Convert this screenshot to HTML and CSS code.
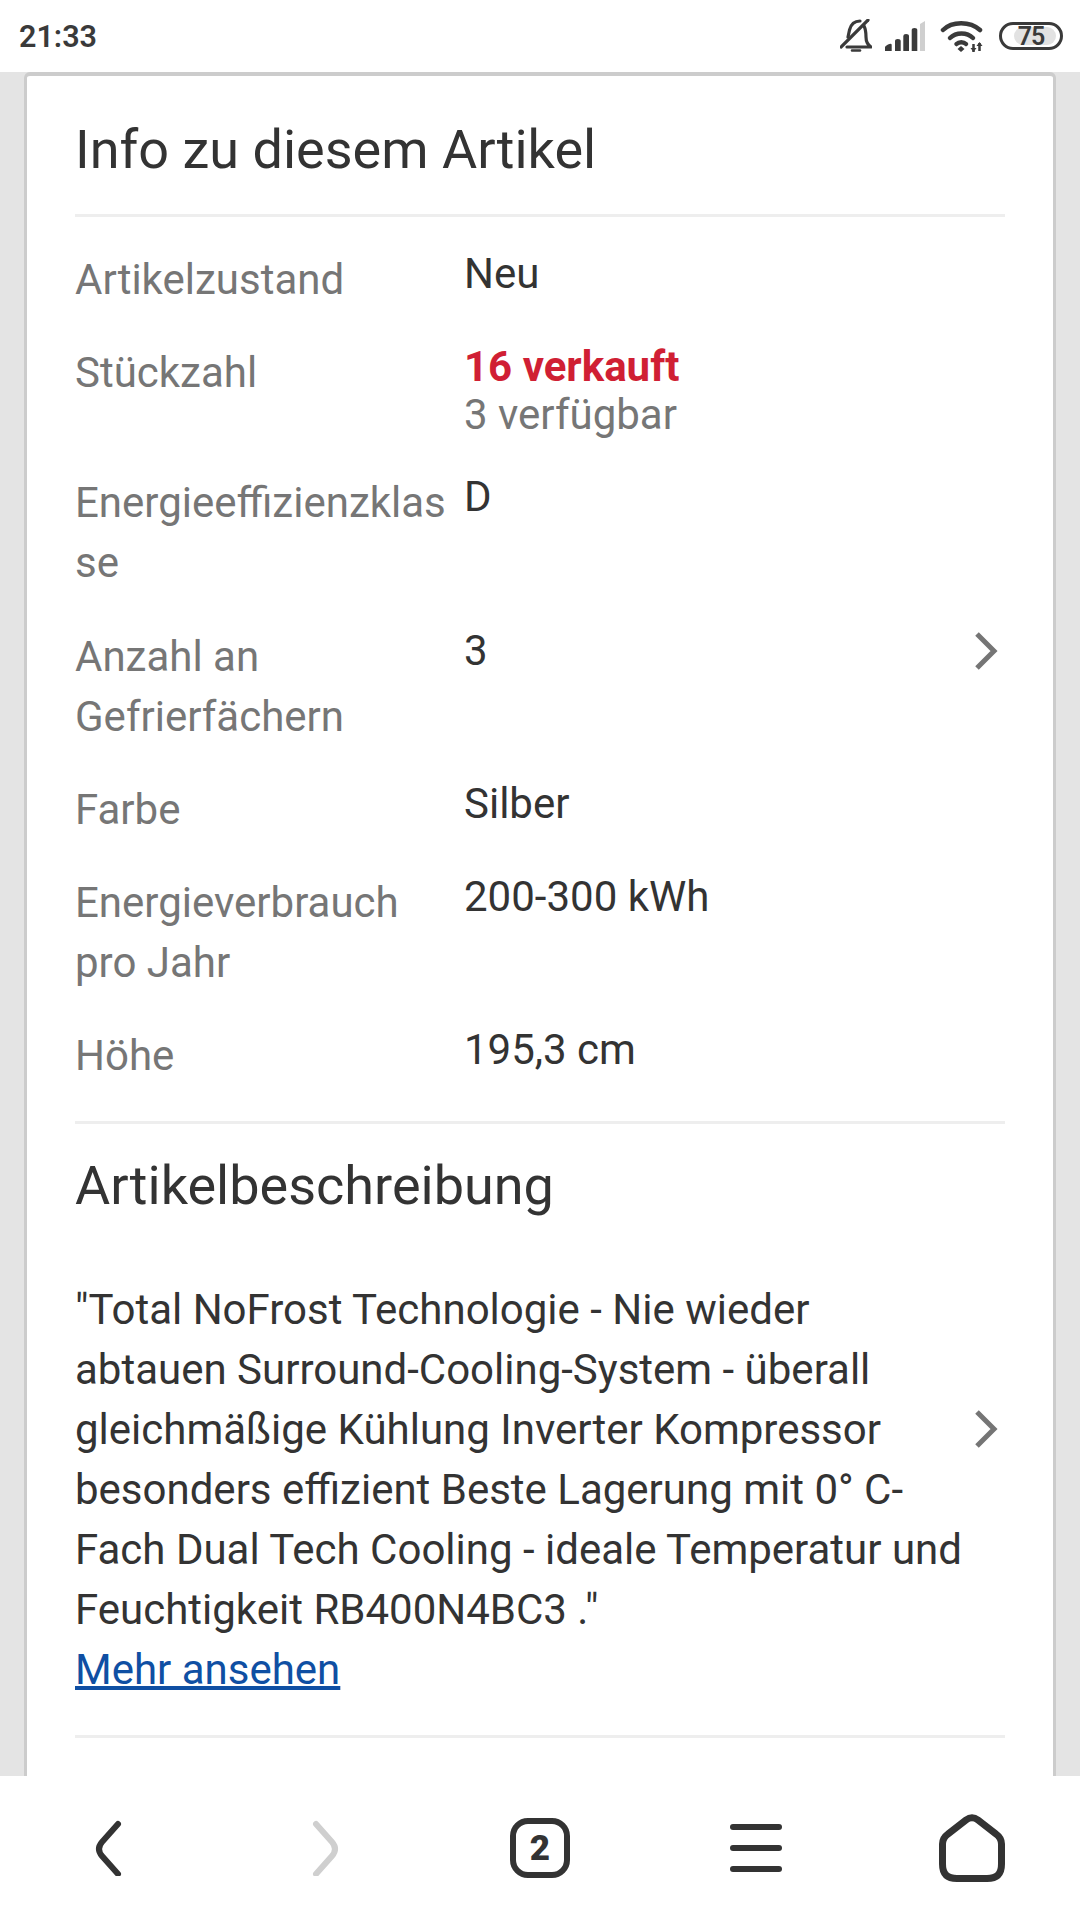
FILE: index.html
```html
<!DOCTYPE html>
<html lang="de">
<head>
<meta charset="utf-8">
<title>Info zu diesem Artikel</title>
<link rel="stylesheet" href="styles.css">
</head>
<body>
<header class="status">
  <span class="time">21:33</span>
  <div class="status-icons">
    <svg class="i-bell" width="32" height="34" viewBox="0 0 32 34" fill="none" stroke="#3a3a3a" stroke-width="3.200" stroke-linejoin="round" stroke-linecap="round">
      <path d="M8 18 L9.500 11 C11 5 15 2 20 2 M24 7 C25.500 10 26 14 26 18 C26 22 28 26 31 28 H7"/>
      <path d="M1 28 L28 1"/>
      <path d="M12 31.500 H20" stroke-width="2.500"/>
    </svg>
    <svg class="i-signal" width="40" height="30" viewBox="0 0 40 30">
      <path d="M0 30 V26 Q0 25 3 23.500 Q6.700 22 6.700 24 V30 Z" fill="#3a3a3a"/>
      <path d="M10 30 V20 Q10 18 12.800 18 Q15.700 18 15.700 20 V30 Z" fill="#3a3a3a"/>
      <path d="M18.300 30 V15 Q18.300 13 21 13 Q24 13 24 15 V30 Z" fill="#3a3a3a"/>
      <path d="M26.700 30 V9 Q26.700 7 29.500 7 Q32.300 7 32.300 9 V30 Z" fill="#3a3a3a"/>
      <path d="M35 30 V3 L40 0 V30 Z" fill="#cfcfcf"/>
    </svg>
    <svg class="i-wifi" width="44" height="33" viewBox="0 0 44 33" fill="none" stroke="#3a3a3a" stroke-width="4.500" stroke-linecap="round">
      <path d="M3 10 C12 1 30 1 40 10"/>
      <path d="M10 18 C16 12 27 12 33 18"/>
      <path d="M16.500 24 C19 21.500 23.500 21.500 26 24"/>
      <path d="M21 26 L24.500 29 L21 32 L17.500 29 Z" stroke="none" fill="#3a3a3a"/>
      <path d="M33.500 24 V32 M39.500 23 V31" stroke-width="2.500" stroke-linecap="butt"/>
      <path d="M30.500 28 H36.500 L33.500 32 Z M36.500 26 H42.500 L39.500 22 Z" stroke="none" fill="#3a3a3a"/>
    </svg>
    <div class="battery">
      <div class="battery-fill"></div>
      <span class="battery-text">75</span>
    </div>
  </div>
</header>

<main class="page">
  <section class="card">
    <h1 class="title">Info zu diesem Artikel</h1>
    <div class="specs">
      <div class="row"><div class="label">Artikelzustand</div><div class="value">Neu</div></div>
      <div class="row"><div class="label">Stückzahl</div><div class="value"><div class="sold">16 verkauft</div><div class="avail">3 verfügbar</div></div></div>
      <div class="row"><div class="label">Energieeffizienzklasse</div><div class="value">D</div></div>
      <div class="row"><div class="label">Anzahl an Gefrierfächern</div><div class="value">3</div>
        <svg class="chev" width="26" height="40" viewBox="0 0 26 40" fill="none" stroke="#757575" stroke-width="5"><path d="M3 3 L20 20 L3 37"/></svg>
      </div>
      <div class="row"><div class="label">Farbe</div><div class="value">Silber</div></div>
      <div class="row"><div class="label">Energieverbrauch pro Jahr</div><div class="value">200-300 kWh</div></div>
      <div class="row"><div class="label">Höhe</div><div class="value">195,3 cm</div></div>
    </div>
    <div class="desc-section">
      <h2 class="heading">Artikelbeschreibung</h2>
      <div class="desc-row">
        <div class="desc">
          <p class="desc-text">"Total NoFrost Technologie - Nie wieder abtauen Surround-Cooling-System - überall gleichmäßige Kühlung Inverter Kompressor besonders effizient Beste Lagerung mit 0° C-Fach Dual Tech Cooling - ideale Temperatur und Feuchtigkeit RB400N4BC3 ."</p>
          <a class="more" href="#">Mehr ansehen</a>
        </div>
        <svg class="chev chev-desc" width="26" height="40" viewBox="0 0 26 40" fill="none" stroke="#757575" stroke-width="5"><path d="M3 3 L20 20 L3 37"/></svg>
      </div>
    </div>
    <div class="end-rule"></div>
  </section>
</main>

<nav class="nav">
  <div class="nav-cell">
    <svg width="30" height="56" viewBox="0 0 30 56" fill="none" stroke="#333" stroke-width="6" stroke-linecap="round"><path d="M25 4 L9 22 Q3 29 9 36 L25 54"/></svg>
  </div>
  <div class="nav-cell">
    <svg width="30" height="56" viewBox="0 0 30 56" fill="none" stroke="#cfcfcf" stroke-width="6" stroke-linecap="round"><path d="M7 4 L23 22 Q29 29 23 36 L7 54"/></svg>
  </div>
  <div class="nav-cell">
    <div class="tabs">2</div>
  </div>
  <div class="nav-cell">
    <div class="menu"><span class="bar"></span><span class="bar"></span><span class="bar"></span></div>
  </div>
  <div class="nav-cell">
    <svg width="66" height="68" viewBox="0 0 66 68" fill="none" stroke="#333" stroke-width="7" stroke-linejoin="round"><path d="M27 6 Q33 1.500 39 6 L57 20 Q62.500 24 62.500 30 V50 C62.500 60 58 64.500 48 64.500 H18 C8 64.500 3.500 60 3.500 50 V30 Q3.500 24 9 20 Z"/></svg>
  </div>
</nav>
</body>
</html>
```

FILE: styles.css
```css
* { box-sizing: border-box; }
html, body { margin: 0; padding: 0; }
body {
  width: 1080px;
  height: 1920px;
  overflow: hidden;
  display: flex;
  flex-direction: column;
  background: #e4e4e4;
  font-family: Roboto, "Noto Sans", sans-serif;
  color: #333;
}
.status {
  height: 72px;
  flex: none;
  background: #fff;
  display: flex;
  align-items: center;
  justify-content: space-between;
  padding: 0 17px 0 19px;
}
.time { font-size: 30.500px; font-weight: 600; color: #3a3a3a; }
.status-icons { display: flex; align-items: center; gap: 15px; }
.i-bell { margin-right: -2px; }
.battery {
  position: relative;
  width: 64px;
  height: 28px;
  border: 3px solid #3a3a3a;
  border-radius: 14px;
  overflow: hidden;
  display: flex;
  align-items: center;
  justify-content: center;
}
.battery-fill { position: absolute; top: 2px; bottom: 2px; left: 12px; right: 4px; background: #e2e2e2; border-radius: 10px; }
.battery-text { position: relative; font-size: 25px; font-weight: 600; color: #3a3a3a; letter-spacing: -1px; }
.page { flex: 1; min-height: 0; padding: 0 24px; overflow: hidden; }
.card {
  background: #fff;
  height: 100%;
  border: 3px solid #ccc;
  border-top-width: 4px;
  border-bottom: 0;
  border-radius: 6px 6px 0 0;
  padding: 0 48px;
}
.title {
  margin: 0;
  padding: 41px 0 31px;
  border-bottom: 3px solid #eee;
  font-size: 54px;
  font-weight: 400;
  line-height: 66px;
  color: #333;
}
.specs { padding: 33px 0 2px; }
.row {
  position: relative;
  display: flex;
  align-items: flex-start;
  margin-bottom: 33.200px;
}
.label {
  width: 389px;
  flex: none;
  padding-right: 16px;
  font-size: 42px;
  line-height: 60px;
  color: #767676;
  overflow-wrap: anywhere;
}
.value { font-size: 42px; line-height: 48.500px; color: #333; }
.sold { font-weight: 700; color: #d01f34; }
.avail { color: #767676; margin: -1px 0 1px; }
.chev { position: absolute; right: 5px; top: 4px; }
.desc-section { border-top: 3px solid #eee; }
.heading { margin: 0; font-size: 54px; font-weight: 400; line-height: 60px; padding: 32px 0 64px; color: #333; }
.desc-row { position: relative; padding-right: 40px; }
.desc-text { margin: 0; font-size: 42px; line-height: 60px; }
.more { display: block; font-size: 42px; line-height: 60px; color: #0f4fa3; text-decoration: underline; text-decoration-thickness: 4px; }
.chev-desc { top: 129px; }
.end-rule { height: 3px; background: #eee; margin-top: 35px; }
.nav {
  height: 144px;
  flex: none;
  background: #fff;
  display: flex;
}
.nav-cell { flex: 1; display: flex; align-items: center; justify-content: center; }
.tabs {
  width: 60px;
  height: 60px;
  border: 6px solid #333;
  border-radius: 18px;
  display: flex;
  align-items: center;
  justify-content: center;
  font-size: 35px;
  font-weight: 900;
  color: #333;
}
.menu { width: 52px; display: flex; flex-direction: column; gap: 15px; }
.bar { height: 6px; border-radius: 3px; background: #333; }
```
